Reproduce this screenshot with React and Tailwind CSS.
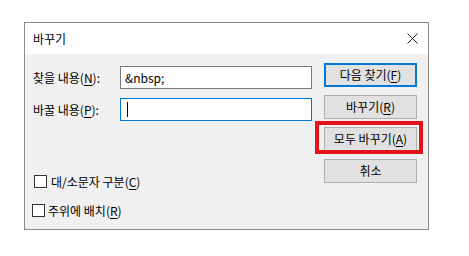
import React from "react";

const font = { fontFamily: '"Noto Sans CJK KR", "Noto Sans", sans-serif' };

function Btn({ children, primary }) {
  return (
    <div
      className={
        "h-[24px] w-[93px] flex items-center justify-center bg-[#e1e1e1] text-[12px] text-black leading-none " +
        (primary ? "border-2 border-[#0078d7]" : "border border-[#adadad]")
      }
    >
      {children}
    </div>
  );
}

function U({ children }) {
  return <span className="underline underline-offset-2">{children}</span>;
}

export default function App() {
  return (
    <div className="w-[469px] h-[256px] bg-white pt-[22px] pl-[24px]" style={font}>
      <div className="w-[405px] h-[208px] border border-[#8a8a8a] flex flex-col">
        <div className="h-[31px] bg-white flex items-center justify-between pl-[8px] pr-[10px]">
          <span className="text-[12px] text-black leading-none">바꾸기</span>
          <svg width="11" height="11" viewBox="0 0 11 11">
            <path d="M0.5 0.5 L10.5 10.5 M10.5 0.5 L0.5 10.5" stroke="#222" strokeWidth="1" fill="none" />
          </svg>
        </div>
        <div className="flex-1 bg-[#f0f0f0] flex relative">
          <div className="flex-1 flex flex-col pl-[8px] pt-[12px]">
            <div className="flex items-center h-[23px]">
              <span className="w-[87px] text-[12px] text-black leading-none">
                찾을 내용(<U>N</U>):
              </span>
              <div className="w-[192px] h-[23px] bg-white border border-[#7a7a7a] flex items-center pl-[4px] text-[12px] leading-none text-black">
                &amp;nbsp;
              </div>
            </div>
            <div className="flex items-center h-[23px] mt-[9px]">
              <span className="w-[87px] text-[12px] text-black leading-none">
                바꿀 내용(<U>P</U>):
              </span>
              <div className="w-[192px] h-[23px] bg-white border border-[#0078d7] flex items-center pl-[6px]">
                <div className="w-px h-[15px] bg-black" />
              </div>
            </div>
            <div className="flex items-center mt-[54px] ml-[1px] gap-[4px]">
              <div className="w-[13px] h-[13px] bg-white border border-[#333]" />
              <span className="text-[12px] text-black leading-none">
                대/소문자 구분(<U>C</U>)
              </span>
            </div>
            <div className="flex items-center mt-[16px] ml-[-1px] gap-[3px]">
              <div className="w-[13px] h-[13px] bg-white border border-[#333]" />
              <span className="text-[12px] text-black leading-none">
                주위에 배치(<U>R</U>)
              </span>
            </div>
          </div>
          <div className="w-[93px] mr-[11px] pt-[9px] flex flex-col gap-[8px]">
            <Btn primary>
              다음 찾기(<U>F</U>)
            </Btn>
            <Btn>
              바꾸기(<U>R</U>)
            </Btn>
            <Btn>
              모두 바꾸기(<U>A</U>)
            </Btn>
            <Btn>취소</Btn>
          </div>
          <div className="absolute left-[290px] top-[67px] w-[108px] h-[33px] border-[4px] border-[#e3121b]" />
        </div>
      </div>
    </div>
  );
}
